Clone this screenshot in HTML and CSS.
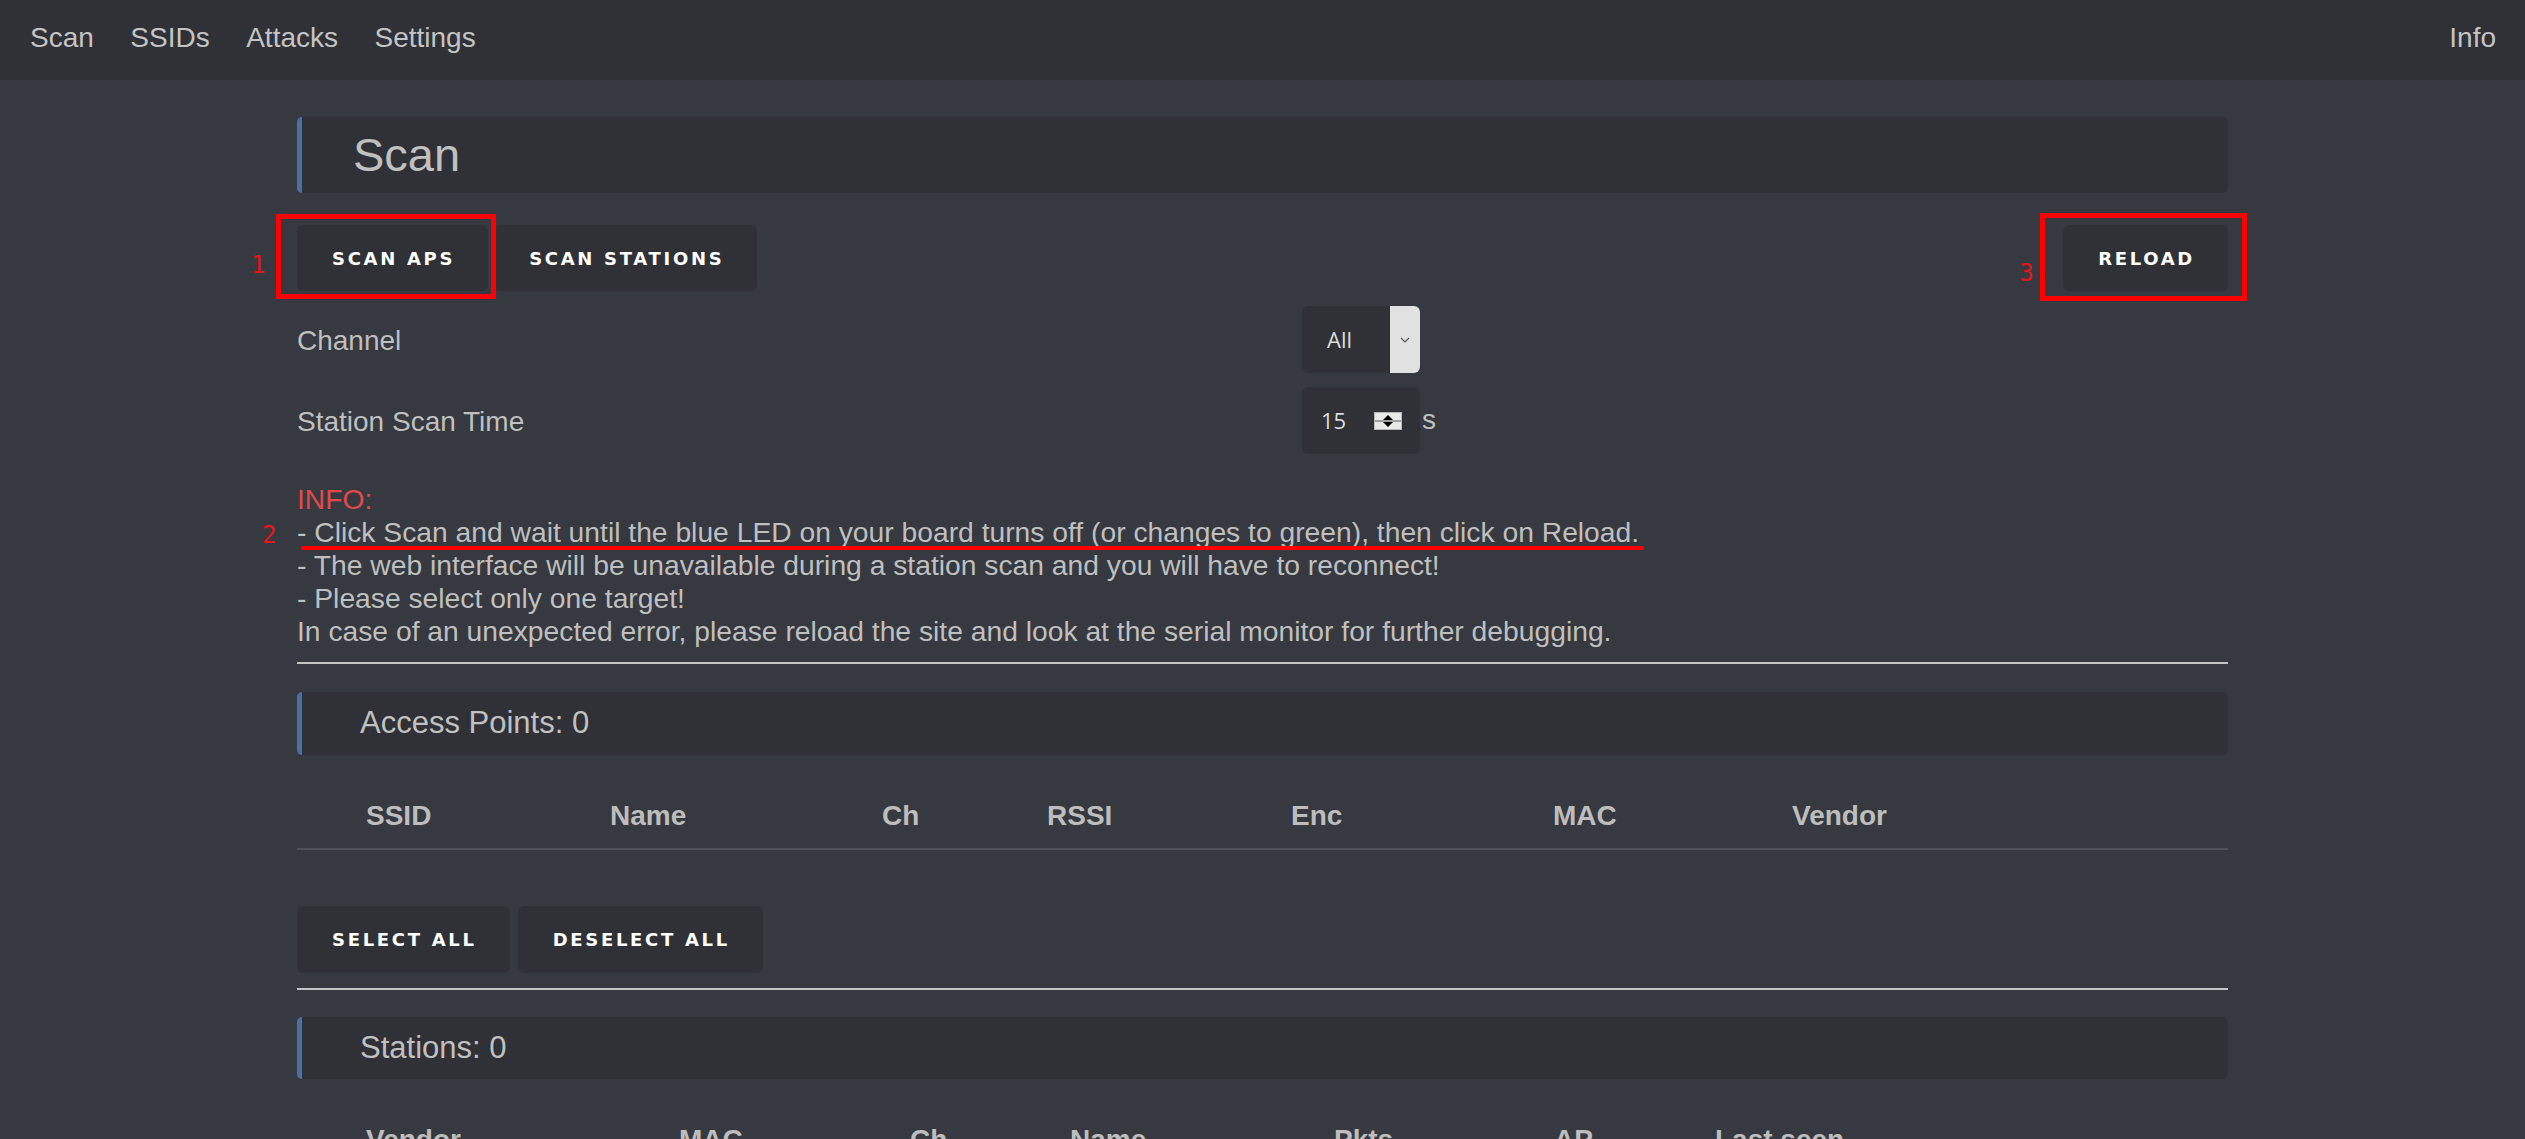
FILE: index.html
```html
<!DOCTYPE html>
<html lang="en">
<head>
<meta charset="utf-8">
<title>Scan</title>
<link rel="stylesheet" href="styles.css">
</head>
<body>
<nav class="nav">
  <a class="nav-link" href="#">Scan</a>
  <a class="nav-link" href="#">SSIDs</a>
  <a class="nav-link" href="#">Attacks</a>
  <a class="nav-link" href="#">Settings</a>
  <a class="nav-link nav-right" href="#">Info</a>
</nav>

<main class="container">
  <h1 class="title-box">Scan</h1>

  <div class="btn-row">
    <div class="btn-group">
      <div class="annot">
        <button class="btn">SCAN APS</button>
        <span class="annot-frame frame-1"></span>
        <span class="annot-num num-1">1</span>
      </div>
      <button class="btn">SCAN STATIONS</button>
    </div>
    <div class="annot">
      <button class="btn">RELOAD</button>
      <span class="annot-frame frame-3"></span>
      <span class="annot-num num-3">3</span>
    </div>
  </div>

  <div class="form-row first">
    <label class="form-label">Channel</label>
    <div class="field">
      <div class="select">
        <span class="select-value">All</span>
        <span class="select-arrow">
          <svg width="10" height="6" viewBox="0 0 10 6"><path d="M1 1 L5 5 L9 1" fill="none" stroke="#555" stroke-width="1.1"/></svg>
        </span>
      </div>
    </div>
  </div>

  <div class="form-row">
    <label class="form-label">Station Scan Time</label>
    <div class="field">
      <div class="number">
        <span class="number-value">15</span>
        <span class="spinner">
          <span class="spin-up"></span>
          <span class="spin-sep"></span>
          <span class="spin-down"></span>
        </span>
      </div>
      <span class="unit">s</span>
    </div>
  </div>

  <div class="info">
    <div class="info-title">INFO:</div>
    <div class="info-line marked">- Click Scan and wait until the blue LED on your board turns off (or changes to green), then click on Reload.<span class="annot-line"></span><span class="annot-num num-2">2</span></div>
    <div class="info-line">- The web interface will be unavailable during a station scan and you will have to reconnect!</div>
    <div class="info-line">- Please select only one target!</div>
    <div class="info-line">In case of an unexpected error, please reload the site and look at the serial monitor for further debugging.</div>
  </div>

  <hr class="rule">

  <h2 class="section-box">Access Points: 0</h2>
  <table class="list">
    <colgroup>
      <col style="width:69px"><col style="width:244px"><col style="width:272px"><col style="width:165px"><col style="width:244px"><col style="width:262px"><col style="width:239px"><col>
    </colgroup>
    <thead>
      <tr><th></th><th>SSID</th><th>Name</th><th>Ch</th><th>RSSI</th><th>Enc</th><th>MAC</th><th>Vendor</th></tr>
    </thead>
  </table>

  <div class="btn-row second">
    <div class="btn-group wide">
      <button class="btn">SELECT ALL</button>
      <button class="btn">DESELECT ALL</button>
    </div>
  </div>

  <hr class="rule rule-2">

  <h2 class="section-box">Stations: 0</h2>
  <table class="list">
    <colgroup>
      <col style="width:69px"><col style="width:313px"><col style="width:231px"><col style="width:160px"><col style="width:264px"><col style="width:220px"><col style="width:161px"><col>
    </colgroup>
    <thead>
      <tr><th></th><th>Vendor</th><th>MAC</th><th>Ch</th><th>Name</th><th>Pkts</th><th>AP</th><th>Last seen</th></tr>
    </thead>
  </table>
</main>
</body>
</html>
```

FILE: styles.css
```css
* { box-sizing: border-box; }

body {
  margin: 0;
  background: #36393f;
  color: #bfbfbf;
  font-family: "Liberation Sans", Arial, sans-serif;
  font-size: 28px;
  line-height: 32.3px;
}

.nav {
  height: 80px;
  background: #2f3136;
  display: flex;
  align-items: center;
  gap: 36.5px;
  padding: 0 29px 3px 30px;
}

.nav-link {
  color: #c4c4c4;
  text-decoration: none;
}

.nav-right { margin-left: auto; }

.container {
  width: 1931px;
  margin: 0 auto;
  padding-bottom: 200px;
}

.title-box {
  margin: 37px 0 0;
  height: 76px;
  background: #2f3136;
  border-left: 5px solid #4a6fa5;
  border-radius: 5px;
  padding-left: 51px;
  display: flex;
  align-items: center;
  font-size: 47px;
  font-weight: normal;
  color: #c0c0c0;
}

.btn-row {
  margin-top: 32px;
  display: flex;
  justify-content: space-between;
}

.btn-row.second { margin-top: 56px; }

.btn-group {
  display: flex;
  gap: 6px;
}

.btn-group.wide { gap: 8px; }

.btn {
  height: 66px;
  background: #2f3136;
  border: none;
  border-radius: 6px;
  color: #ffffff;
  font-family: "DejaVu Sans", Verdana, sans-serif;
  font-weight: bold;
  font-size: 18px;
  letter-spacing: 2.7px;
  padding: 0 33px 0 35px;
}

.btn-row.second .btn { height: 67px; }

.annot { position: relative; display: flex; }

.annot-frame {
  position: absolute;
  border: 5px solid #ff0000;
  pointer-events: none;
}

.frame-1 { left: -21px; right: -8px; top: -11px; bottom: -8px; }
.frame-3 { left: -23px; right: -19px; top: -12px; bottom: -10px; }

.annot-num {
  position: absolute;
  color: #e3161c;
  font-family: "DejaVu Sans Mono", "Liberation Mono", monospace;
  font-size: 24px;
  line-height: 24px;
}

.num-1 { left: -46px; top: 28px; }
.num-3 { left: -44px; top: 36px; }

.form-row {
  display: grid;
  grid-template-columns: 1005px auto;
  align-items: center;
  margin-top: 14px;
}

.form-row.first { margin-top: 15px; }

.form-label { padding-top: 3px; }

.field {
  display: flex;
  align-items: center;
}

.select {
  width: 118px;
  height: 67px;
  background: #2f3136;
  border-radius: 6px;
  display: flex;
  align-items: stretch;
}

.select-value {
  flex: 1;
  display: flex;
  align-items: center;
  padding-left: 25px;
  font-family: "Open Sans", sans-serif;
  font-size: 22px;
  color: #dcdcdc;
}

.select-arrow {
  width: 30px;
  background: #e1e1e1;
  border-radius: 0 6px 6px 0;
  display: flex;
  align-items: center;
  justify-content: center;
}

.number {
  position: relative;
  width: 118px;
  height: 67px;
  background: #2f3136;
  border-radius: 6px;
  display: flex;
  align-items: center;
  padding-left: 19px;
}

.number-value {
  font-family: "Open Sans", sans-serif;
  font-size: 22px;
  color: #dcdcdc;
  width: 53px;
}

.spinner {
  width: 28px;
  height: 18px;
  background: #e9e9e9;
  border: 1px solid #b8b8b8;
  display: flex;
  flex-direction: column;
  align-items: center;
  justify-content: space-between;
  padding: 2px 0;
}

.spin-up {
  width: 0; height: 0;
  border-left: 5px solid transparent;
  border-right: 5px solid transparent;
  border-bottom: 5px solid #000;
}

.spin-down {
  width: 0; height: 0;
  border-left: 5px solid transparent;
  border-right: 5px solid transparent;
  border-top: 5px solid #000;
}

.spin-sep {
  width: 100%;
  height: 2px;
  background: #a0a0a0;
}

.unit {
  margin-left: 2px;
  color: #bfbfbf;
}

.info {
  margin-top: 29px;
  font-size: 28.25px;
  line-height: 33px;
}

.info-title { color: #e04a4a; }

.info-line.marked { position: relative; }

.annot-line {
  position: absolute;
  left: 4px;
  width: 1343px;
  top: 30px;
  height: 4px;
  background: #ff0000;
  border-radius: 2px;
}

.num-2 { left: -35px; top: 7px; }

.rule {
  border: none;
  height: 2px;
  background: #c3c3c3;
  margin: 14px 0 0;
}

.rule-2 { margin-top: 15px; }

.section-box {
  margin: 28px 0 0;
  height: 63px;
  background: #2f3136;
  border-left: 5px solid #4a6fa5;
  border-radius: 5px;
  padding-left: 58px;
  display: flex;
  align-items: center;
  font-size: 31px;
  font-weight: normal;
  color: #c0c0c0;
}

.rule-2 + .section-box { margin-top: 27px; height: 62px; }

.list {
  width: 100%;
  table-layout: fixed;
  border-collapse: collapse;
  margin-top: 45px;
}

.list th {
  text-align: left;
  font-weight: bold;
  color: #bdbdbd;
  padding: 0 0 16px;
  border-bottom: 2px solid #4f5257;
  line-height: 32px;
}
```
